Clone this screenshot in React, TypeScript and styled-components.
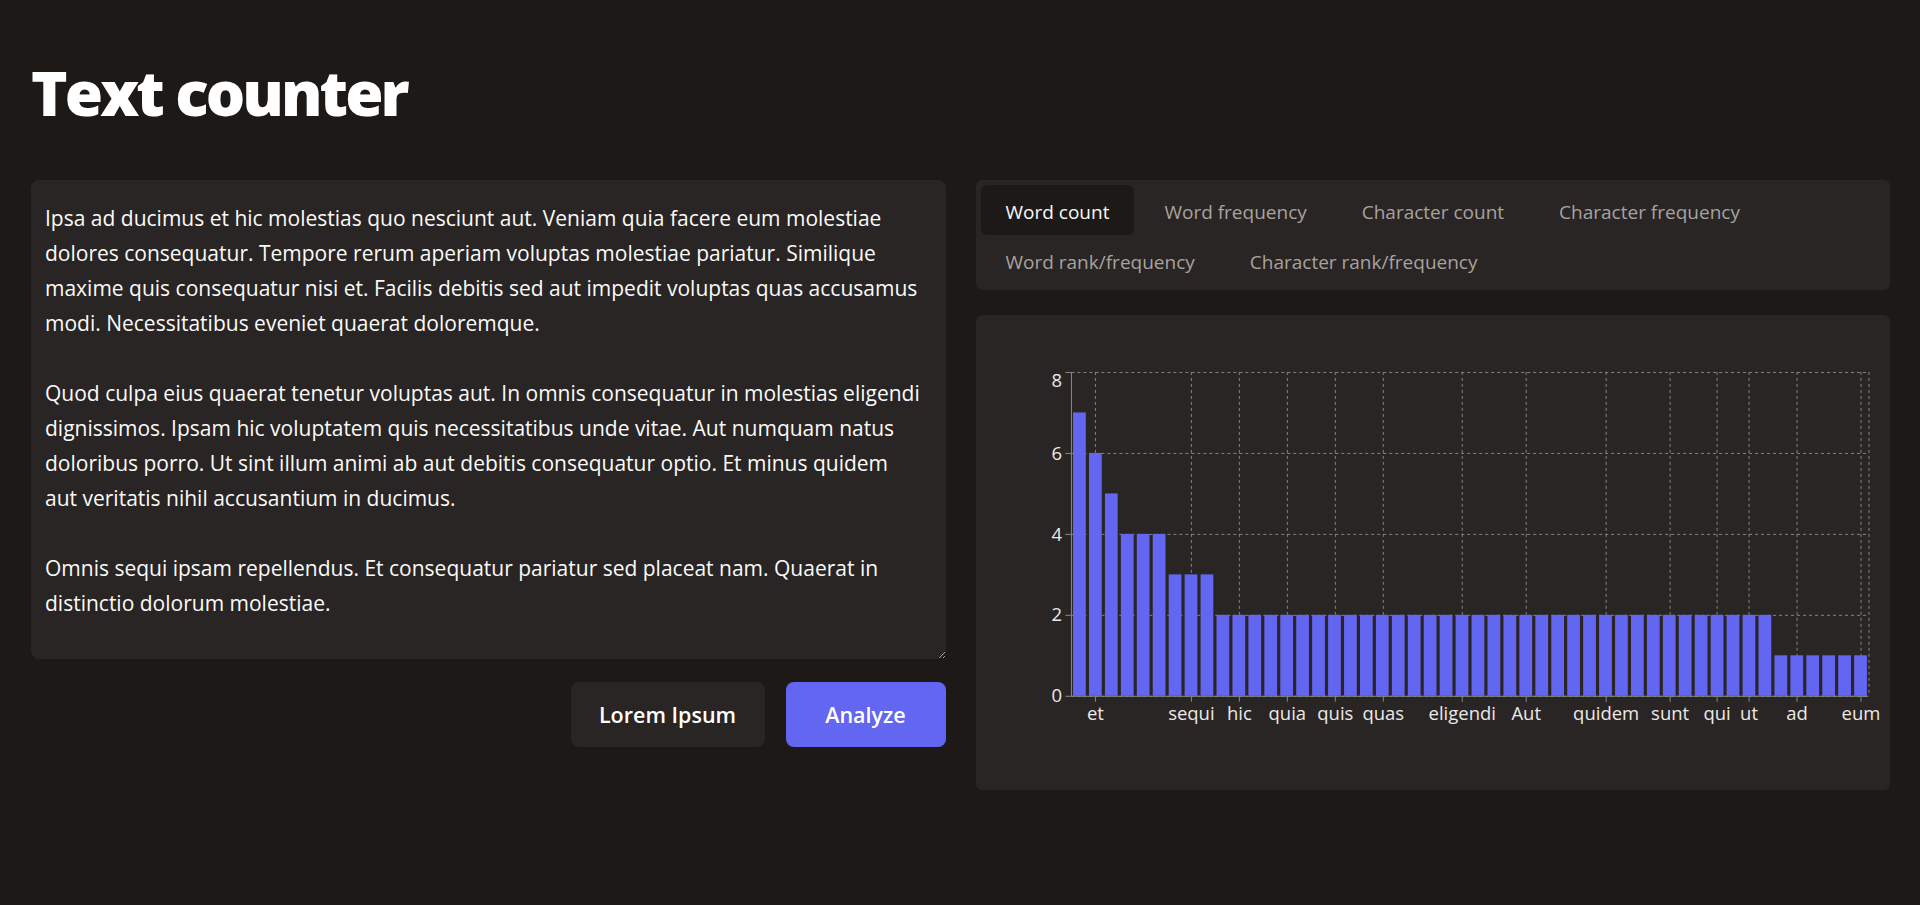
import React, { useState } from "react";
import styled, { createGlobalStyle } from "styled-components";

const GlobalStyle = createGlobalStyle`
  html, body {
    margin: 0;
    padding: 0;
    background: #1c1917;
  }
  body {
    font-family: "Open Sans", "Noto Sans", Arial, sans-serif;
    color: #fafaf9;
  }
  * { box-sizing: border-box; }
`;

const Page = styled.main`
  min-height: 905px;
  padding: 55px 30px 0 31px;
  background: #1c1917;
`;

const Title = styled.h1`
  margin: 0 0 51px;
  font-family: "Open Sans", "Noto Sans", sans-serif;
  font-weight: 800;
  font-size: 62px;
  line-height: 1.2;
  letter-spacing: -2.9px;
  color: #ffffff;
`;

const Columns = styled.div`
  display: grid;
  grid-template-columns: 1fr 1fr;
  column-gap: 30px;
  align-items: start;
`;

const LeftColumn = styled.section`
  display: flex;
  flex-direction: column;
  gap: 23px;
`;

const TextArea = styled.textarea`
  display: block;
  width: 100%;
  height: 479px;
  margin: 0;
  padding: 21px 14px;
  border: none;
  border-radius: 8px;
  outline: none;
  background: #292524;
  color: #fafaf9;
  font-family: "Open Sans", "Noto Sans", sans-serif;
  font-size: 21px;
  line-height: 35px;
  white-space: pre;
  overflow: hidden;
  resize: vertical;
`;

const ButtonRow = styled.div`
  display: flex;
  justify-content: flex-end;
  gap: 21px;
`;

const Button = styled.button<{ $primary?: boolean; $width: number }>`
  width: ${(p) => p.$width}px;
  height: 65px;
  border: none;
  border-radius: 8px;
  background: ${(p) => (p.$primary ? "#6366f1" : "#292524")};
  color: #ffffff;
  font-family: "Open Sans", "Noto Sans", sans-serif;
  font-weight: 600;
  font-size: 21.5px;
  cursor: pointer;
`;

const RightColumn = styled.section`
  display: flex;
  flex-direction: column;
  gap: 25px;
`;

const TabList = styled.div`
  display: flex;
  flex-wrap: wrap;
  column-gap: 5px;
  padding: 5px;
  border-radius: 6px;
  background: #292524;
`;

const Tab = styled.button<{ $active?: boolean }>`
  height: 50px;
  padding: 3px 25px 0;
  border: none;
  border-radius: 6px;
  background: ${(p) => (p.$active ? "#1c1917" : "transparent")};
  color: ${(p) => (p.$active ? "#fafaf9" : "#a8a29e")};
  font-family: "Open Sans", "Noto Sans", sans-serif;
  font-size: 19px;
  cursor: pointer;
`;

const ChartPanel = styled.div`
  height: 475px;
  border-radius: 6px;
  background: #292524;
  overflow: hidden;
`;

const ChartSvg = styled.svg`
  display: block;
  width: 100%;
  height: 100%;
  font-family: "Open Sans", "Noto Sans", sans-serif;
`;

const TEXT = [
  "Ipsa ad ducimus et hic molestias quo nesciunt aut. Veniam quia facere eum molestiae",
  "dolores consequatur. Tempore rerum aperiam voluptas molestiae pariatur. Similique",
  "maxime quis consequatur nisi et. Facilis debitis sed aut impedit voluptas quas accusamus",
  "modi. Necessitatibus eveniet quaerat doloremque.",
  "",
  "Quod culpa eius quaerat tenetur voluptas aut. In omnis consequatur in molestias eligendi",
  "dignissimos. Ipsam hic voluptatem quis necessitatibus unde vitae. Aut numquam natus",
  "doloribus porro. Ut sint illum animi ab aut debitis consequatur optio. Et minus quidem",
  "aut veritatis nihil accusantium in ducimus.",
  "",
  "Omnis sequi ipsam repellendus. Et consequatur pariatur sed placeat nam. Quaerat in",
  "distinctio dolorum molestiae.",
].join("\n");

const TABS = [
  "Word count",
  "Word frequency",
  "Character count",
  "Character frequency",
  "Word rank/frequency",
  "Character rank/frequency",
];

const WORDS = [
  "aut", "et", "consequatur", "in", "molestias", "voluptas", "quaerat", "sequi", "molestiae",
  "ducimus", "hic", "Et", "Ipsam", "quia", "facere", "nisi", "quis", "Facilis", "debitis",
  "quas", "sed", "impedit", "accusamus", "omnis", "eligendi", "voluptatem", "unde", "vitae",
  "Aut", "numquam", "natus", "porro", "minus", "quidem", "ipsam", "pariatur", "placeat",
  "sunt", "Quaerat", "dolorum", "qui", "doloribus", "ut", "illum", "Ipsa", "ad", "nihil",
  "animi", "optio", "eum",
];

const VALUES = WORDS.map((_, i) => {
  if (i === 0) return 7;
  if (i === 1) return 6;
  if (i === 2) return 5;
  if (i < 6) return 4;
  if (i < 9) return 3;
  if (i < 44) return 2;
  return 1;
});

const VISIBLE_TICKS = [1, 7, 10, 13, 16, 19, 24, 28, 33, 37, 40, 42, 45, 49];

const X0 = 95.5;
const PITCH = 15.95;
const Y_TOP = 57;
const Y_BOTTOM = 381;
const UNIT = (Y_BOTTOM - Y_TOP) / 8;
const X1 = X0 + PITCH * WORDS.length;
const GRID = "#858585";
const AXIS = "#8a8a8a";
const LABEL = "#ece9e6";

const yOf = (v: number) => Y_BOTTOM - v * UNIT;
const centerOf = (i: number) => X0 + PITCH * i + PITCH / 2;

function WordChart() {
  const yTicks = [0, 2, 4, 6, 8];
  return (
    <ChartSvg viewBox="0 0 915 475" preserveAspectRatio="xMinYMin meet">
      {yTicks.map((v) => (
        <line
          key={`h${v}`}
          x1={X0}
          x2={X1}
          y1={yOf(v) + 0.5}
          y2={yOf(v) + 0.5}
          stroke={GRID}
          strokeDasharray="3 3"
        />
      ))}
      {[...VISIBLE_TICKS.map(centerOf), X1].map((x, k) => (
        <line
          key={`v${k}`}
          x1={Math.round(x) + 0.5}
          x2={Math.round(x) + 0.5}
          y1={Y_TOP}
          y2={Y_BOTTOM}
          stroke={GRID}
          strokeDasharray="3 3"
        />
      ))}
      {VALUES.map((v, i) => (
        <rect
          key={`b${i}`}
          x={X0 + PITCH * i + PITCH * 0.1}
          y={yOf(v)}
          width={PITCH * 0.8}
          height={v * UNIT}
          fill="#6366f1"
        />
      ))}
      <line x1={X0} x2={X0} y1={Y_TOP} y2={Y_BOTTOM + 0.5} stroke={AXIS} />
      <line x1={X0} x2={X1} y1={Y_BOTTOM + 0.5} y2={Y_BOTTOM + 0.5} stroke={AXIS} />
      {yTicks.map((v) => (
        <g key={`yt${v}`}>
          <line x1={X0 - 6} x2={X0} y1={yOf(v) + 0.5} y2={yOf(v) + 0.5} stroke={AXIS} />
          <text
            x={86}
            y={Math.max(yOf(v), Y_TOP + 8.5)}
            dy="0.36em"
            textAnchor="end"
            fontSize="18.5"
            fill={LABEL}
          >
            {v}
          </text>
        </g>
      ))}
      {VISIBLE_TICKS.map((i) => {
        const x = Math.round(centerOf(i)) + 0.5;
        return (
          <g key={`xt${i}`}>
            <line x1={x} x2={x} y1={Y_BOTTOM} y2={Y_BOTTOM + 6} stroke={AXIS} />
            <text x={x} y={399} dy="0.36em" textAnchor="middle" fontSize="18.5" fill={LABEL}>
              {WORDS[i]}
            </text>
          </g>
        );
      })}
    </ChartSvg>
  );
}

export default function App() {
  const [text, setText] = useState(TEXT);
  const [active, setActive] = useState(0);
  return (
    <Page>
      <GlobalStyle />
      <Title>Text counter</Title>
      <Columns>
        <LeftColumn>
          <TextArea
            value={text}
            wrap="off"
            spellCheck={false}
            onChange={(e) => setText(e.target.value)}
          />
          <ButtonRow>
            <Button $width={194}>Lorem Ipsum</Button>
            <Button $primary $width={160}>
              Analyze
            </Button>
          </ButtonRow>
        </LeftColumn>
        <RightColumn>
          <TabList>
            {TABS.map((t, i) => (
              <Tab key={t} $active={i === active} onClick={() => setActive(i)}>
                {t}
              </Tab>
            ))}
          </TabList>
          <ChartPanel>
            <WordChart />
          </ChartPanel>
        </RightColumn>
      </Columns>
    </Page>
  );
}
